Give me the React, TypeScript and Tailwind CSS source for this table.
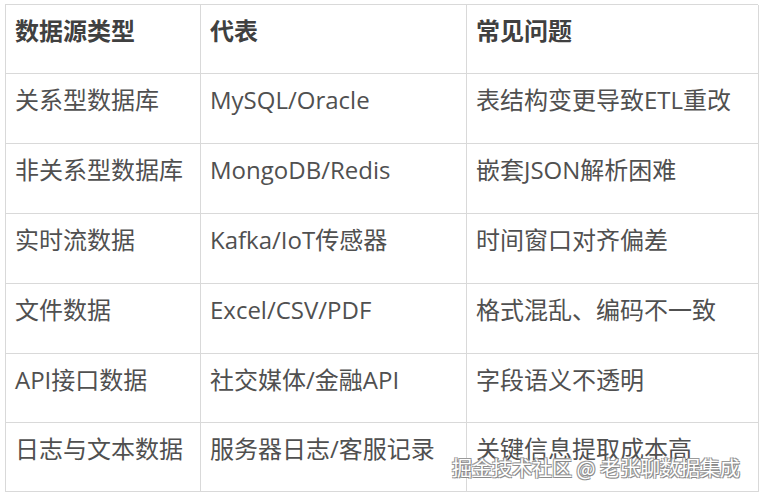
const ROWS: [string, string, string][] = [
  ["关系型数据库", "MySQL/Oracle", "表结构变更导致ETL重改"],
  ["非关系型数据库", "MongoDB/Redis", "嵌套JSON解析困难"],
  ["实时流数据", "Kafka/IoT传感器", "时间窗口对齐偏差"],
  ["文件数据", "Excel/CSV/PDF", "格式混乱、编码不一致"],
  ["API接口数据", "社交媒体/金融API", "字段语义不透明"],
  ["日志与文本数据", "服务器日志/客服记录", "关键信息提取成本高"],
];

const HEIGHTS = ["h-[70px]", "h-[70px]", "h-[70px]", "h-[70px]", "h-[69px]", "h-[69px]"];

const cell = "border-r border-b border-[#d9d9d9] pl-[9px] pt-[10px] leading-[32px] whitespace-nowrap";

export default function App() {
  return (
    <div className="relative w-[765px] h-[495px] bg-white pl-[5px] pt-[4px] font-['Open_Sans','Noto_Sans_CJK_SC',sans-serif] text-[24px] text-[#505050] overflow-hidden">
      <div className="grid grid-cols-[195px_266px_292px] w-[753px] border-t border-l border-[#d9d9d9]">
        <div className={`${cell} h-[69px] font-bold text-[#404040]`}>数据源类型</div>
        <div className={`${cell} h-[69px] font-bold text-[#404040]`}>代表</div>
        <div className={`${cell} h-[69px] font-bold text-[#404040]`}>常见问题</div>
        {ROWS.map((row, i) =>
          row.map((text, j) => (
            <div key={`${i}-${j}`} className={`${cell} ${HEIGHTS[i]}`}>
              {text}
            </div>
          ))
        )}
      </div>

      <div className="absolute left-[452px] top-[453px] text-[20px] leading-[30px] text-white font-['Noto_Sans_CJK_SC',sans-serif] [text-shadow:1px_1px_0_#8a8a8a,-1px_-1px_0_#9a9a9a,1px_-1px_0_#9a9a9a,-1px_1px_0_#9a9a9a]">
        掘金技术社区 @ 老张聊数据集成
      </div>
    </div>
  );
}
